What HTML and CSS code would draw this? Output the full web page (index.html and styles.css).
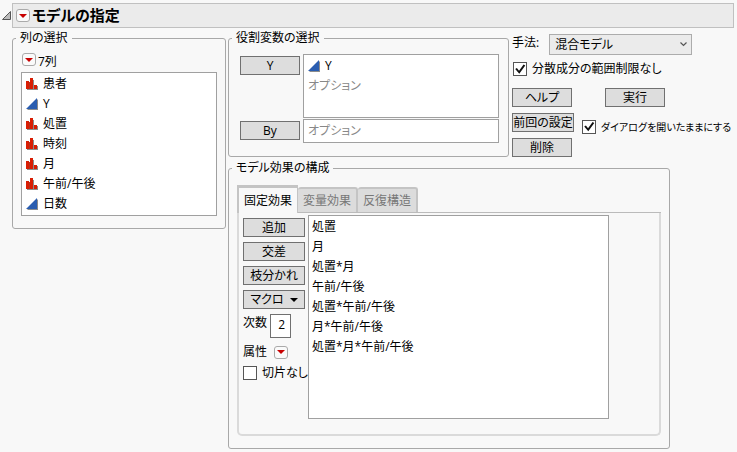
FILE: index.html
```html
<!DOCTYPE html>
<html lang="ja">
<head>
<meta charset="utf-8">
<title>モデルの指定</title>
<link rel="stylesheet" href="styles.css">
</head>
<body>

<svg class="defs" width="0" height="0">
  <symbol id="nominal" viewBox="0 0 12 12">
    <path d="M1 12v-1h11v1zM3 4h1v7H3zM7 2h1v9H7zM11 8h1v4h-1z" fill="#8c8c8c"/>
    <path d="M0 3h3v8H0zM4 0h3v11H4zM8 7h3v4H8z" fill="#d81e05"/>
    <path d="M3 4h1v7H3z" fill="#b83020"/>
  </symbol>
  <symbol id="continuous" viewBox="0 0 12 12">
    <path d="M1 12L12 1v11z" fill="#8c8c8c"/>
    <path d="M0 11L11 0v11z" fill="#2a5db0"/>
  </symbol>
  <symbol id="hotspot" viewBox="0 0 8 4">
    <path d="M0 0h8L4 4z" fill="#c80000"/>
  </symbol>
</svg>

<header class="outline">
  <svg class="disclosure" viewBox="0 0 10 10"><path d="M8.500 .5v8h-8z" fill="#bbb" stroke="#555"/></svg>
  <div class="title-bar">
    <button class="hotspot" aria-label="モデルの指定 メニュー"><svg><use href="#hotspot"/></svg></button>
    <h1>モデルの指定</h1>
  </div>
</header>

<main class="dialog">
  <fieldset class="group columns">
    <legend>列の選択</legend>
    <div class="columns-head">
      <button class="hotspot" aria-label="列メニュー"><svg><use href="#hotspot"/></svg></button>
      <span>7列</span>
    </div>
    <ul class="list">
      <li><svg><use href="#nominal"/></svg>患者</li>
      <li><svg><use href="#continuous"/></svg>Y</li>
      <li><svg><use href="#nominal"/></svg>処置</li>
      <li><svg><use href="#nominal"/></svg>時刻</li>
      <li><svg><use href="#nominal"/></svg>月</li>
      <li><svg><use href="#nominal"/></svg>午前/午後</li>
      <li><svg><use href="#continuous"/></svg>日数</li>
    </ul>
  </fieldset>

  <div class="work">
    <div class="top">
      <fieldset class="group roles">
        <legend>役割変数の選択</legend>
        <div class="role-grid">
          <button class="btn">Y</button>
          <ul class="list role-y">
            <li><svg><use href="#continuous"/></svg>Y</li>
            <li class="hint">オプション</li>
          </ul>
          <button class="btn">By</button>
          <ul class="list role-by">
            <li class="hint">オプション</li>
          </ul>
        </div>
      </fieldset>

      <div class="controls">
        <div class="method">
          <label for="method">手法:</label>
          <div class="select">
            <select id="method"><option>混合モデル</option></select>
            <svg viewBox="0 0 7 5"><path d="M.5 .5l3 3 3-3" fill="none" stroke="#555" stroke-width="1.200"/></svg>
          </div>
        </div>
        <label class="check"><input type="checkbox" checked>分散成分の範囲制限なし</label>
        <div class="actions">
          <button class="btn">ヘルプ</button>
          <button class="btn run">実行</button>
          <button class="btn recall">前回の設定</button>
          <label class="check keep"><input type="checkbox" checked>ダイアログを開いたままにする</label>
          <button class="btn">削除</button>
        </div>
      </div>
    </div>

    <fieldset class="group effects">
      <legend>モデル効果の構成</legend>
      <div class="tabs" role="tablist">
        <button class="tab active" role="tab" aria-selected="true">固定効果</button>
        <button class="tab" role="tab">変量効果</button>
        <button class="tab" role="tab">反復構造</button>
      </div>
      <div class="panel" role="tabpanel">
        <div class="tools">
          <button class="btn">追加</button>
          <button class="btn">交差</button>
          <button class="btn">枝分かれ</button>
          <button class="btn">マクロ<svg class="caret" viewBox="0 0 8 4"><path d="M0 0h8L4 4z"/></svg></button>
          <div class="degree">
            <label for="degree">次数</label>
            <input id="degree" type="text" value="2">
          </div>
          <div class="attributes">
            <span>属性</span>
            <button class="hotspot" aria-label="属性"><svg><use href="#hotspot"/></svg></button>
          </div>
          <label class="check"><input type="checkbox">切片なし</label>
        </div>
        <ul class="list terms">
          <li>処置</li>
          <li>月</li>
          <li>処置*月</li>
          <li>午前/午後</li>
          <li>処置*午前/午後</li>
          <li>月*午前/午後</li>
          <li>処置*月*午前/午後</li>
        </ul>
      </div>
    </fieldset>
  </div>
</main>

</body>
</html>
```

FILE: styles.css
```css
* { box-sizing: border-box; }

body {
  margin: 0;
  padding: 3px 3px 3px 2px;
  background: #f8f8f8;
  color: #000;
  font: 12px/18px "Open Sans", "Noto Sans CJK JP", sans-serif;
  font-feature-settings: "palt";
}

button, input, select {
  margin: 0;
  font: inherit;
  font-feature-settings: inherit;
  color: inherit;
}

.defs { position: absolute; }

/* title */

.outline { display: flex; align-items: center; }

.disclosure { width: 10px; height: 10px; }

.title-bar {
  flex: 1;
  display: flex;
  align-items: center;
  gap: 2px;
  height: 25px;
  padding-left: 3px;
  border: 1px solid #c0c0c0;
  background: #ebebeb;
}

h1 {
  margin: 0;
  font-size: 15px;
  line-height: 23px;
}

.hotspot {
  display: flex;
  align-items: center;
  justify-content: center;
  width: 14px;
  height: 13px;
  padding: 0;
  border: 1px solid #aaa;
  border-radius: 3px;
  background: #fafafa;
}

.hotspot svg { width: 8px; height: 4px; }

/* groups */

.dialog {
  display: flex;
  align-items: flex-start;
  gap: 2px;
  padding: 1px 0 0 10px;
}

.work { flex: 1; min-width: 0; }

.group {
  min-width: 0;
  margin: 0;
  padding: 0 3px;
  border: 1px solid #a8a8a8;
  border-radius: 3px;
}

legend { padding: 0 4px; }

.list {
  margin: 0;
  padding: 1px 4px;
  border: 1px solid #a0a0a0;
  background: #fff;
  list-style: none;
}

.list li {
  display: flex;
  align-items: center;
  gap: 5px;
  height: 20px;
  white-space: nowrap;
}

.list svg { width: 12px; height: 12px; }

.list .hint { color: #888; }

.btn {
  display: flex;
  align-items: center;
  justify-content: center;
  width: 60px;
  height: 19px;
  padding: 0;
  border: 1px solid #707070;
  background: #ddd;
  white-space: nowrap;
}

.check {
  display: flex;
  align-items: center;
  gap: 5px;
  white-space: nowrap;
}

.check input {
  appearance: none;
  flex: none;
  width: 14px;
  height: 14px;
  border: 1px solid #555;
  background: #fff;
}

.check input:checked::before {
  content: "";
  display: block;
  width: 12px;
  height: 12px;
  background: #111;
  clip-path: polygon(10% 50%, 24% 42%, 42% 64%, 80% 12%, 94% 20%, 44% 90%);
}

/* column list */

.columns { width: 214px; padding: 0 8px 12px; }

.columns legend { margin-left: -5px; }

.columns-head {
  display: flex;
  gap: 2px;
  height: 25px;
  padding: 6px 0 0 1px;
}

/* roles */

.top { display: flex; gap: 3px; }

.roles { flex: none; width: 281px; padding-bottom: 13px; }

.role-grid {
  display: grid;
  grid-template-columns: 60px 1fr;
  column-gap: 3px;
  row-gap: 1px;
  padding: 7px 6px 0 8px;
}

.role-grid .btn { margin-top: 2px; }

.role-y { height: 64px; }

.role-by { height: 24px; }

/* right-hand controls */

.controls { padding-top: 5px; }

.method { display: flex; gap: 10px; margin-bottom: 5px; }

.select { position: relative; width: 143px; }

.select select {
  appearance: none;
  display: block;
  width: 100%;
  height: 21px;
  padding: 0 5px;
  border: 1px solid #acacac;
  border-radius: 0;
  background: #ebebeb;
}

.select svg {
  position: absolute;
  top: 8px;
  right: 5px;
  width: 7px;
  height: 5px;
}

.controls > .check { padding-left: 1px; }

.actions {
  display: grid;
  grid-template-columns: 70px auto;
  row-gap: 6px;
  margin-top: 10px;
}

.actions .run { margin-left: 23px; }

.actions .recall { width: 62px; }

.keep { padding-top: 8px; height: 19px; font-size: 10px; }

/* model effects */

.effects {
  max-width: 442px;
  margin-top: 2px;
  padding: 0 8px 12px;
}

.effects legend { margin-left: -5px; }

.tabs {
  display: flex;
  align-items: flex-end;
  height: 36px;
  border-bottom: 1px solid #bbb;
}

.tab {
  width: 60px;
  height: 25px;
  padding: 0;
  border: 1px solid #c4c4c4;
  border-width: 2px 2px 0 0;
  border-radius: 3px 3px 0 0;
  background: #dcdcdc;
  color: #777;
}

.tab.active {
  width: 61px;
  height: 28px;
  margin-bottom: -1px;
  border-width: 3px 1px 0 2px;
  border-radius: 0;
  background: #f8f8f8;
  color: #000;
}

.panel {
  display: flex;
  gap: 3px;
  padding: 2px 50px 15px 4px;
  border: 2px solid #dadada;
  border-top: 0;
  border-radius: 0 0 5px 5px;
}

.tools {
  display: flex;
  flex-direction: column;
  gap: 5px;
  width: 62px;
  padding-top: 3px;
}

.tools .btn { width: 62px; }

.caret { width: 8px; height: 4px; margin-left: 6px; }

.degree { display: flex; gap: 3px; }

.degree input {
  width: 21px;
  height: 24px;
  padding: 0 5px 4px 0;
  border: 1px solid #707070;
  background: #fff;
  text-align: right;
}

.attributes { display: flex; align-items: center; gap: 7px; }

.tools .check { margin-top: -2px; }

.terms { flex: 1; height: 204px; padding: 1px 3px; }
```
